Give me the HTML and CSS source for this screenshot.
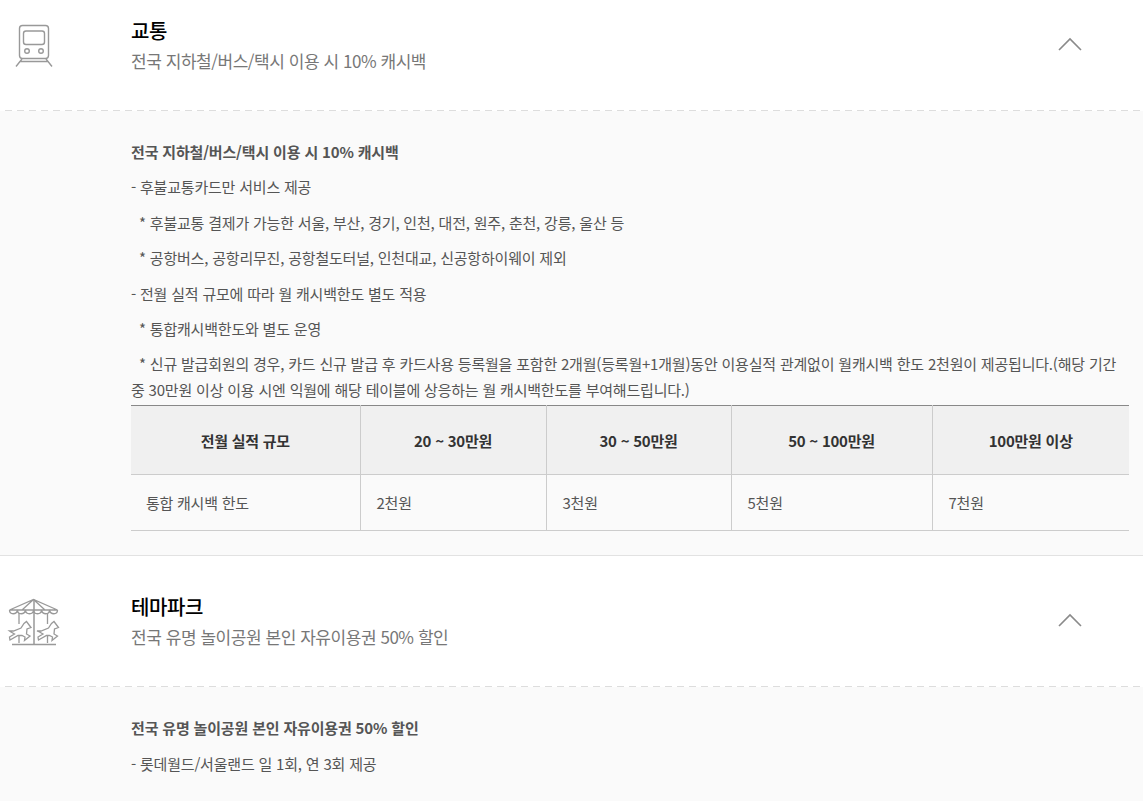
FILE: index.html
```html
<!DOCTYPE html>
<html lang="ko">
<head>
<meta charset="utf-8">
<title>혜택</title>
<link rel="stylesheet" href="styles.css">
</head>
<body>
<main class="list">
  <section class="item">
    <header class="head">
      <svg class="icon" width="131" height="130" viewBox="0 0 131 130" fill="none" stroke="#999" stroke-width="1.4">
        <rect x="19.500" y="44.500" width="29" height="33" rx="3"/>
        <rect x="23.500" y="50" width="21" height="13.500" rx="2.500"/>
        <circle cx="27" cy="70" r="2.300"/>
        <circle cx="41" cy="70" r="2.300"/>
        <path d="M22 78 16 85.500M46 78l6 7.500M20 80.500h28"/>
      </svg>
      <div class="titles">
        <h2 class="title">교통</h2>
        <p class="sub">전국 지하철/버스/택시 이용 시 10% 캐시백</p>
      </div>
      <svg class="chev" width="24" height="14" viewBox="0 0 24 14" fill="none" stroke="#8a8a8a" stroke-width="1.6"><path d="M1 13 12 2l11 11"/></svg>
    </header>
    <div class="panel">
      <p class="line strong">전국 지하철/버스/택시 이용 시 10% 캐시백</p>
      <p class="line">- 후불교통카드만 서비스 제공</p>
      <p class="line">&nbsp; * 후불교통 결제가 가능한 서울, 부산, 경기, 인천, 대전, 원주, 춘천, 강릉, 울산 등</p>
      <p class="line">&nbsp; * 공항버스, 공항리무진, 공항철도터널, 인천대교, 신공항하이웨이 제외</p>
      <p class="line">- 전월 실적 규모에 따라 월 캐시백한도 별도 적용</p>
      <p class="line">&nbsp; * 통합캐시백한도와 별도 운영</p>
      <p class="line">&nbsp; * 신규 발급회원의 경우, 카드 신규 발급 후 카드사용 등록월을 포함한 2개월(등록월+1개월)동안 이용실적 관계없이 월캐시백 한도 2천원이 제공됩니다.(해당 기간 중 30만원 이상 이용 시엔 익월에 해당 테이블에 상응하는 월 캐시백한도를 부여해드립니다.)</p>
      <table class="grid">
        <colgroup>
          <col class="c1"><col class="c2"><col class="c3"><col class="c4"><col class="c5">
        </colgroup>
        <thead>
          <tr><th>전월 실적 규모</th><th>20 ~ 30만원</th><th>30 ~ 50만원</th><th>50 ~ 100만원</th><th>100만원 이상</th></tr>
        </thead>
        <tbody>
          <tr><td>통합 캐시백 한도</td><td>2천원</td><td>3천원</td><td>5천원</td><td>7천원</td></tr>
        </tbody>
      </table>
    </div>
  </section>
  <section class="item">
    <header class="head">
      <svg class="icon" width="131" height="130" viewBox="0 0 131 130" fill="none" stroke="#999" stroke-width="1.3">
        <path d="M9.500 53 33.500 42.500 57.500 53M9.500 53h48M33.500 42.500 22 53M33.500 42.500 45 53"/>
        <path d="M9.500 53c0 5 7 5 8 0 0 5 7 5 8 0 0 5 8 5 8 0 0 5 8 5 8 0 1 5 8 5 8 0 1 5 8 5 8 0"/>
        <path d="M34 42.500V87M12 87.500h44" stroke-width="1.500"/>
        <path d="M19 56v11M19 79v7M47.500 56v11M47.500 79v7"/>
        <path d="M9.500 74h4l7.500-3 3-4.500 2.500-2 4.500 6-4 1.500-.5 5 3.500 2-5.500 4.500 .5-3.500-3-1.500H18l-8 4.500-.5-3 5-3-3.500-2z"/>
        <path d="M37 74h4l7.500-3 3-4.500 2.500-2 4.500 6-4 1.500-.5 5 3.500 2-5.500 4.500 .5-3.500-3-1.500h-3l-8 4.500-.5-3 5-3-3.500-2z"/>
      </svg>
      <div class="titles">
        <h2 class="title">테마파크</h2>
        <p class="sub">전국 유명 놀이공원 본인 자유이용권 50% 할인</p>
      </div>
      <svg class="chev" width="24" height="14" viewBox="0 0 24 14" fill="none" stroke="#8a8a8a" stroke-width="1.6"><path d="M1 13 12 2l11 11"/></svg>
    </header>
    <div class="panel last">
      <p class="line strong">전국 유명 놀이공원 본인 자유이용권 50% 할인</p>
      <p class="line">- 롯데월드/서울랜드 일 1회, 연 3회 제공</p>
    </div>
  </section>
</main>
</body>
</html>
```

FILE: styles.css
```css
* { box-sizing: border-box; }
html, body { margin: 0; padding: 0; height: 100%; overflow: hidden; background: #fff; }
body { font-family: "Noto Sans CJK KR", "Noto Sans", sans-serif; color: #555; font-size: 15px; letter-spacing: -0.2px; }
.list { margin-top: -20px; }
.item { border-bottom: 1px solid #e2e2e2; }
.head {
  height: 131px;
  display: grid;
  grid-template-columns: 131px 1fr 24px;
  align-items: center;
  padding-right: 61px;
  background: repeating-linear-gradient(90deg, #ddd 0 7px, transparent 7px 12px) 5px 100% / 100% 1px no-repeat;
}
.icon { display: block; }
.title { margin: 0; font-size: 20px; line-height: 30px; font-weight: 500; color: #000; letter-spacing: -0.4px; }
.sub { margin: 0; font-size: 17px; line-height: 30px; color: #777; letter-spacing: -0.45px; }
.chev { margin-top: -3px; }
.panel { background: #fafafa; padding: 28px 14px 24px 131px; }
.panel.last { height: 400px; }
.line { margin: 0 0 10.200px; padding-right: 6px; line-height: 25.200px; }
.strong { font-weight: 700; letter-spacing: -0.17px; }
.grid { width: 998px; border-collapse: collapse; table-layout: fixed; border-top: 1px solid #888; margin-top: -6.600px; }
.c1 { width: 229px; } .c2 { width: 186px; } .c3 { width: 185px; } .c4 { width: 201px; } .c5 { width: 197px; }
.grid th, .grid td { border-bottom: 1px solid #ccc; border-left: 1px solid #ccc; letter-spacing: -0.25px; }
.grid th:first-child, .grid td:first-child { border-left: 0; }
.grid th { height: 69px; background: #f0f0f0; color: #333; font-weight: 700; text-align: center; }
.grid td { height: 56px; padding: 0 15px; text-align: left; color: #555; }
.grid td + td { padding-left: 16px; }
```
